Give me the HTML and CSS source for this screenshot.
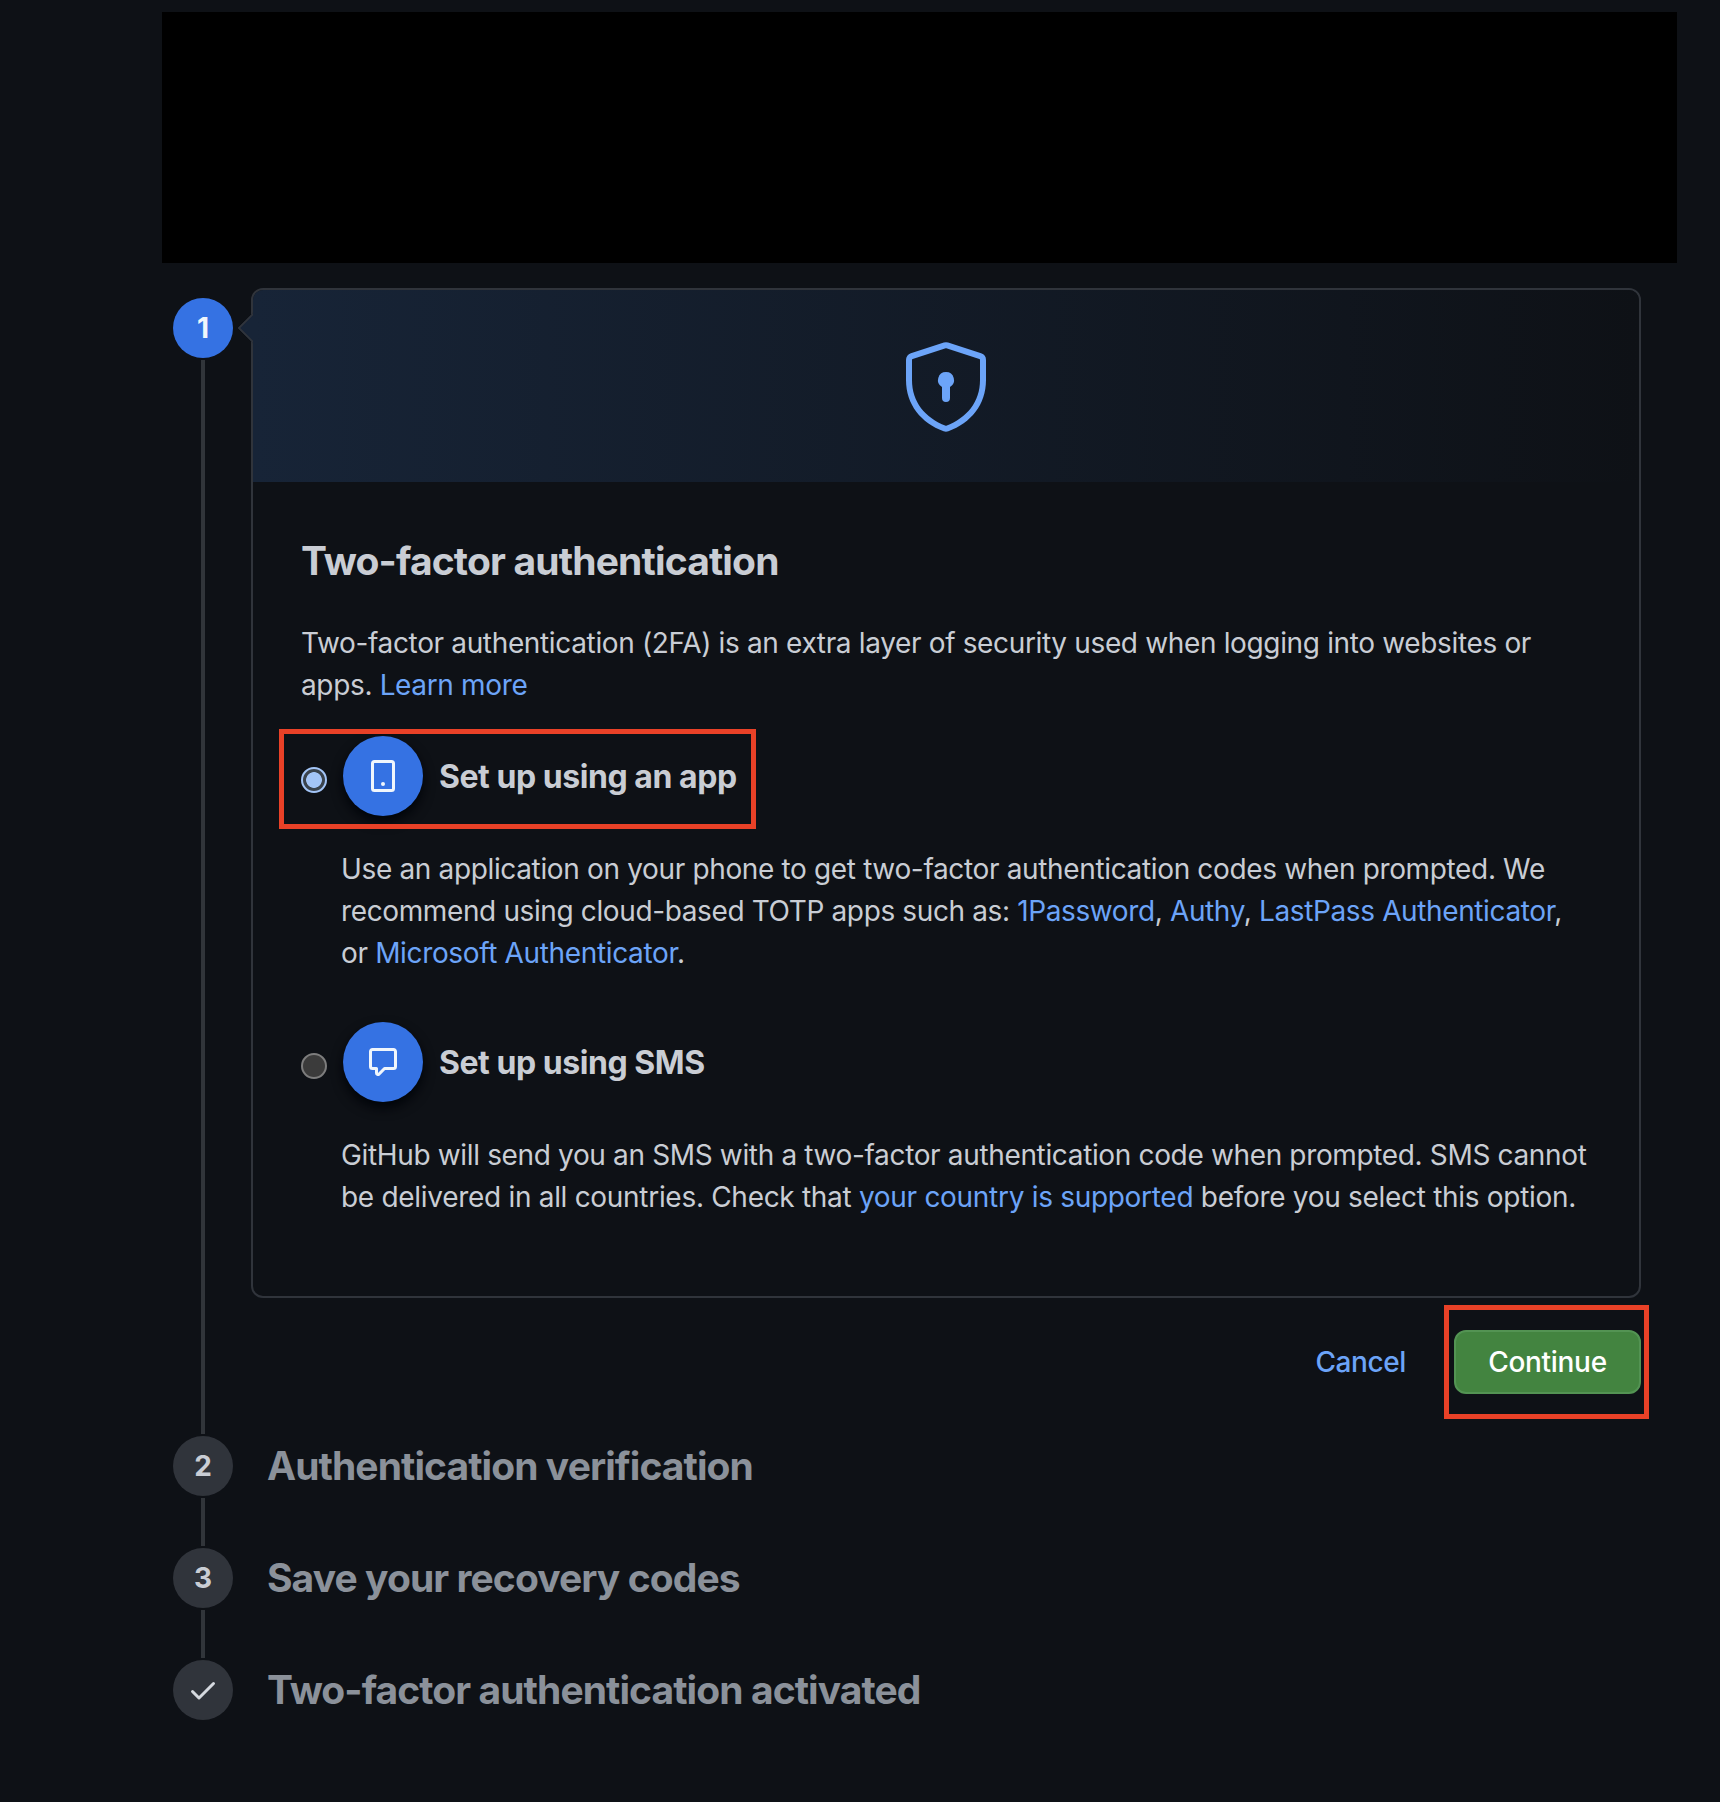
FILE: index.html
```html
<!DOCTYPE html>
<html lang="en">
<head>
    <meta charset="UTF-8">
    <meta name="viewport" content="width=device-width, initial-scale=1.0">
    <title>Two-factor authentication</title>
    <link rel="stylesheet" href="styles.css">
</head>
<body>
    <div class="top-block"></div>

    <main class="steps">
        <section class="step step-active">
            <div class="step-rail">
                <span class="step-badge">1</span>
                <span class="step-line"></span>
            </div>
            <div class="step-main">
                <div class="card">
                    <div class="card-banner">
                        <svg class="shield-icon" viewBox="0 0 24 24" aria-hidden="true">
                            <path fill-rule="evenodd" d="M12.077 2.563a.25.25 0 00-.154 0L3.673 5.24a.249.249 0 00-.173.237V10.5c0 5.461 3.28 9.483 8.43 11.426a.2.2 0 00.14 0c5.15-1.943 8.43-5.965 8.43-11.426V5.476a.25.25 0 00-.173-.237l-8.25-2.676zm-.617-1.426a1.75 1.75 0 011.08 0l8.25 2.675A1.75 1.75 0 0122 5.476V10.5c0 6.19-3.77 10.705-9.401 12.83a1.699 1.699 0 01-1.198 0C5.771 21.204 2 16.69 2 10.5V5.476c0-.76.49-1.43 1.21-1.664l8.25-2.675zM13 12.232A2 2 0 0012 8.5a2 2 0 00-1 3.732V15a1 1 0 102 0v-2.768z"/>
                        </svg>
                    </div>
                    <div class="card-body">
                        <h1 class="card-title">Two-factor authentication</h1>
                        <p class="text">Two-factor authentication (2FA) is an extra layer of security used when logging into websites or<br>
                            apps. <a href="#">Learn more</a></p>

                        <label class="option option-highlight">
                            <input class="option-radio" type="radio" name="method" checked>
                            <span class="option-icon">
                                <svg viewBox="0 0 16 16" aria-hidden="true">
                                    <rect class="icon-outline" x="2.75" y=".75" width="10.5" height="14.5" rx="1"/>
                                    <circle cx="8" cy="12" r="1"/>
                                </svg>
                            </span>
                            <span class="option-title">Set up using an app</span>
                        </label>
                        <p class="text option-text">Use an application on your phone to get two-factor authentication codes when prompted. We<br>
                            <span class="text-tight">recommend using cloud-based TOTP apps such as: <a href="#">1Password</a>, <a href="#">Authy</a>, <a href="#">LastPass Authenticator</a>,</span><br>
                            or <a href="#">Microsoft Authenticator</a>.</p>

                        <label class="option option-sms">
                            <input class="option-radio" type="radio" name="method">
                            <span class="option-icon">
                                <svg viewBox="0 0 16 16" aria-hidden="true">
                                    <path fill-rule="evenodd" d="M2.75 2.5a.25.25 0 00-.25.25v7.5c0 .138.112.25.25.25h2a.75.75 0 01.75.75v2.19l2.72-2.72a.75.75 0 01.53-.22h4.5a.25.25 0 00.25-.25v-7.5a.25.25 0 00-.25-.25H2.75zM1 2.75C1 1.784 1.784 1 2.75 1h10.5c.966 0 1.75.784 1.75 1.75v7.5A1.75 1.75 0 0113.25 12H9.06l-2.573 2.573A1.457 1.457 0 014 13.543V12H2.75A1.75 1.75 0 011 10.25v-7.5z"/>
                                </svg>
                            </span>
                            <span class="option-title">Set up using SMS</span>
                        </label>
                        <p class="text option-text">GitHub will send you an SMS with a two-factor authentication code when prompted. SMS cannot<br>
                            <span class="text-loose">be delivered in all countries. Check that <a href="#">your country is supported</a> before you select this option.</span></p>
                    </div>
                </div>
                <div class="actions">
                    <a class="btn-cancel" href="#">Cancel</a>
                    <div class="continue-wrap">
                        <button class="btn-continue" type="button">Continue</button>
                    </div>
                </div>
            </div>
        </section>

        <section class="step">
            <div class="step-rail">
                <span class="step-badge">2</span>
                <span class="step-line"></span>
            </div>
            <h2 class="step-title">Authentication verification</h2>
        </section>

        <section class="step">
            <div class="step-rail">
                <span class="step-badge">3</span>
                <span class="step-line"></span>
            </div>
            <h2 class="step-title">Save your recovery codes</h2>
        </section>

        <section class="step">
            <div class="step-rail">
                <span class="step-badge">
                    <svg viewBox="0 0 16 16" aria-hidden="true">
                        <path fill-rule="evenodd" d="M13.78 4.22a.75.75 0 010 1.06l-7.25 7.25a.75.75 0 01-1.06 0L2.22 9.28a.75.75 0 011.06-1.06L6 10.94l6.72-6.72a.75.75 0 011.06 0z"/>
                    </svg>
                </span>
            </div>
            <h2 class="step-title">Two-factor authentication activated</h2>
        </section>
    </main>
</body>
</html>
```
FILE: styles.css
```css
*,
*::before,
*::after {
    margin: 0;
    padding: 0;
    box-sizing: border-box;
}

body {
    min-height: 1802px;
    padding-top: 12px;
    background-color: #0e1116;
    color: #c9cdd4;
    font-family: Inter, "Liberation Sans", sans-serif;
    font-size: 28px;
    line-height: 42px;
}

a {
    color: #6ca4f8;
    text-decoration: none;
}

.top-block {
    width: 1515px;
    height: 251px;
    margin-left: 162px;
    background-color: #000;
}

.steps {
    width: 1468px;
    margin: 25px 0 0 173px;
}

/* Steps */
.step {
    display: flex;
    min-height: 112px;
}

.step-rail {
    display: flex;
    flex-direction: column;
    align-items: center;
    gap: 2px;
    width: 60px;
    padding-bottom: 2px;
}

.step-badge {
    display: flex;
    justify-content: center;
    align-items: center;
    width: 60px;
    height: 60px;
    flex-shrink: 0;
    border-radius: 50%;
    background-color: #30343b;
    font-size: 28px;
    font-weight: 650;
}

.step-badge svg {
    width: 32px;
    height: 32px;
    fill: #d5d9df;
}

.step-line {
    flex: 1;
    width: 4px;
    background-color: #31353a;
}

.step-active {
    height: 1148px;
}

.step-active .step-rail {
    padding-top: 10px;
}

.step-active .step-badge {
    background-color: #3572e3;
    color: #f0f6fc;
}

.step-main {
    width: 1390px;
    margin-left: 18px;
}

.step-title {
    margin-left: 34px;
    color: #8b919a;
    font-size: 39px;
    font-weight: 650;
    letter-spacing: -0.92px;
    line-height: 60px;
}

/* Card */
.card {
    position: relative;
    height: 1010px;
    border: 2px solid #30343b;
    border-radius: 12px;
}

/* Arrow that points at the step badge */
.card::before {
    content: '';
    position: absolute;
    left: -11px;
    top: 27px;
    width: 22px;
    height: 22px;
    border: 2px solid #30343b;
    background-color: #172437;
    transform: rotate(45deg);
    clip-path: polygon(0 0, 0 100%, 100% 100%);
}

.card-banner {
    display: flex;
    justify-content: center;
    align-items: center;
    height: 192px;
    border-radius: 10px 10px 0 0;
    background: linear-gradient(to right, #172437, #0e1116);
}

.shield-icon {
    width: 96px;
    height: 96px;
    fill: #6ca4f8;
}

.card-body {
    padding: 49px 48px 48px;
}

.card-title {
    margin-bottom: 31px;
    font-size: 39px;
    font-weight: 650;
    letter-spacing: -0.84px;
    line-height: 60px;
}

.text {
    letter-spacing: -0.35px;
    white-space: nowrap;
}

.text-tight {
    letter-spacing: -0.375px;
}

.text-loose {
    letter-spacing: -0.3px;
}

/* Options */
.option {
    position: relative;
    display: flex;
    align-items: center;
    height: 80px;
    margin-top: 30px;
}

.option-sms {
    margin-top: 48px;
}

.option-radio {
    appearance: none;
    width: 26px;
    height: 26px;
    margin-top: 8px;
    border: 2px solid #7d7d7d;
    border-radius: 50%;
    background-color: #3b3b3b;
}

.option-radio:checked {
    border-color: #a3c5f7;
    background: radial-gradient(circle, #a3c5f7 7.5px, #3a434d 8.2px);
}

.option-icon {
    display: flex;
    justify-content: center;
    align-items: center;
    width: 80px;
    height: 80px;
    margin: 0 16px;
    border-radius: 50%;
    background-color: #3572e3;
    box-shadow: 0 6px 12px #010409;
}

.option-icon svg {
    width: 32px;
    height: 32px;
    fill: #f0f6fc;
}

.option-icon .icon-outline {
    fill: none;
    stroke: #f0f6fc;
    stroke-width: 1.5;
}

.option-title {
    padding-top: 2px;
    font-size: 32px;
    font-weight: 650;
    letter-spacing: -0.45px;
}

.option-text {
    margin: 32px 0 0 40px;
}

.option-highlight::after {
    content: '';
    position: absolute;
    left: -22px;
    top: -7px;
    width: 477px;
    height: 100px;
    border: 5px solid #e94127;
}

/* Actions */
.actions {
    display: flex;
    justify-content: flex-end;
    align-items: center;
    gap: 48px;
    margin-top: 32px;
    font-weight: 500;
    letter-spacing: -0.4px;
}

.continue-wrap {
    position: relative;
}

.continue-wrap::after {
    content: '';
    position: absolute;
    left: -10px;
    top: -25px;
    width: 205px;
    height: 114px;
    border: 5px solid #e94127;
    pointer-events: none;
}

.btn-continue {
    display: block;
    width: 187px;
    height: 64px;
    border: 2px solid #539353;
    border-radius: 12px;
    background-color: #438440;
    color: #fff;
    font: inherit;
    letter-spacing: -0.3px;
}
```
